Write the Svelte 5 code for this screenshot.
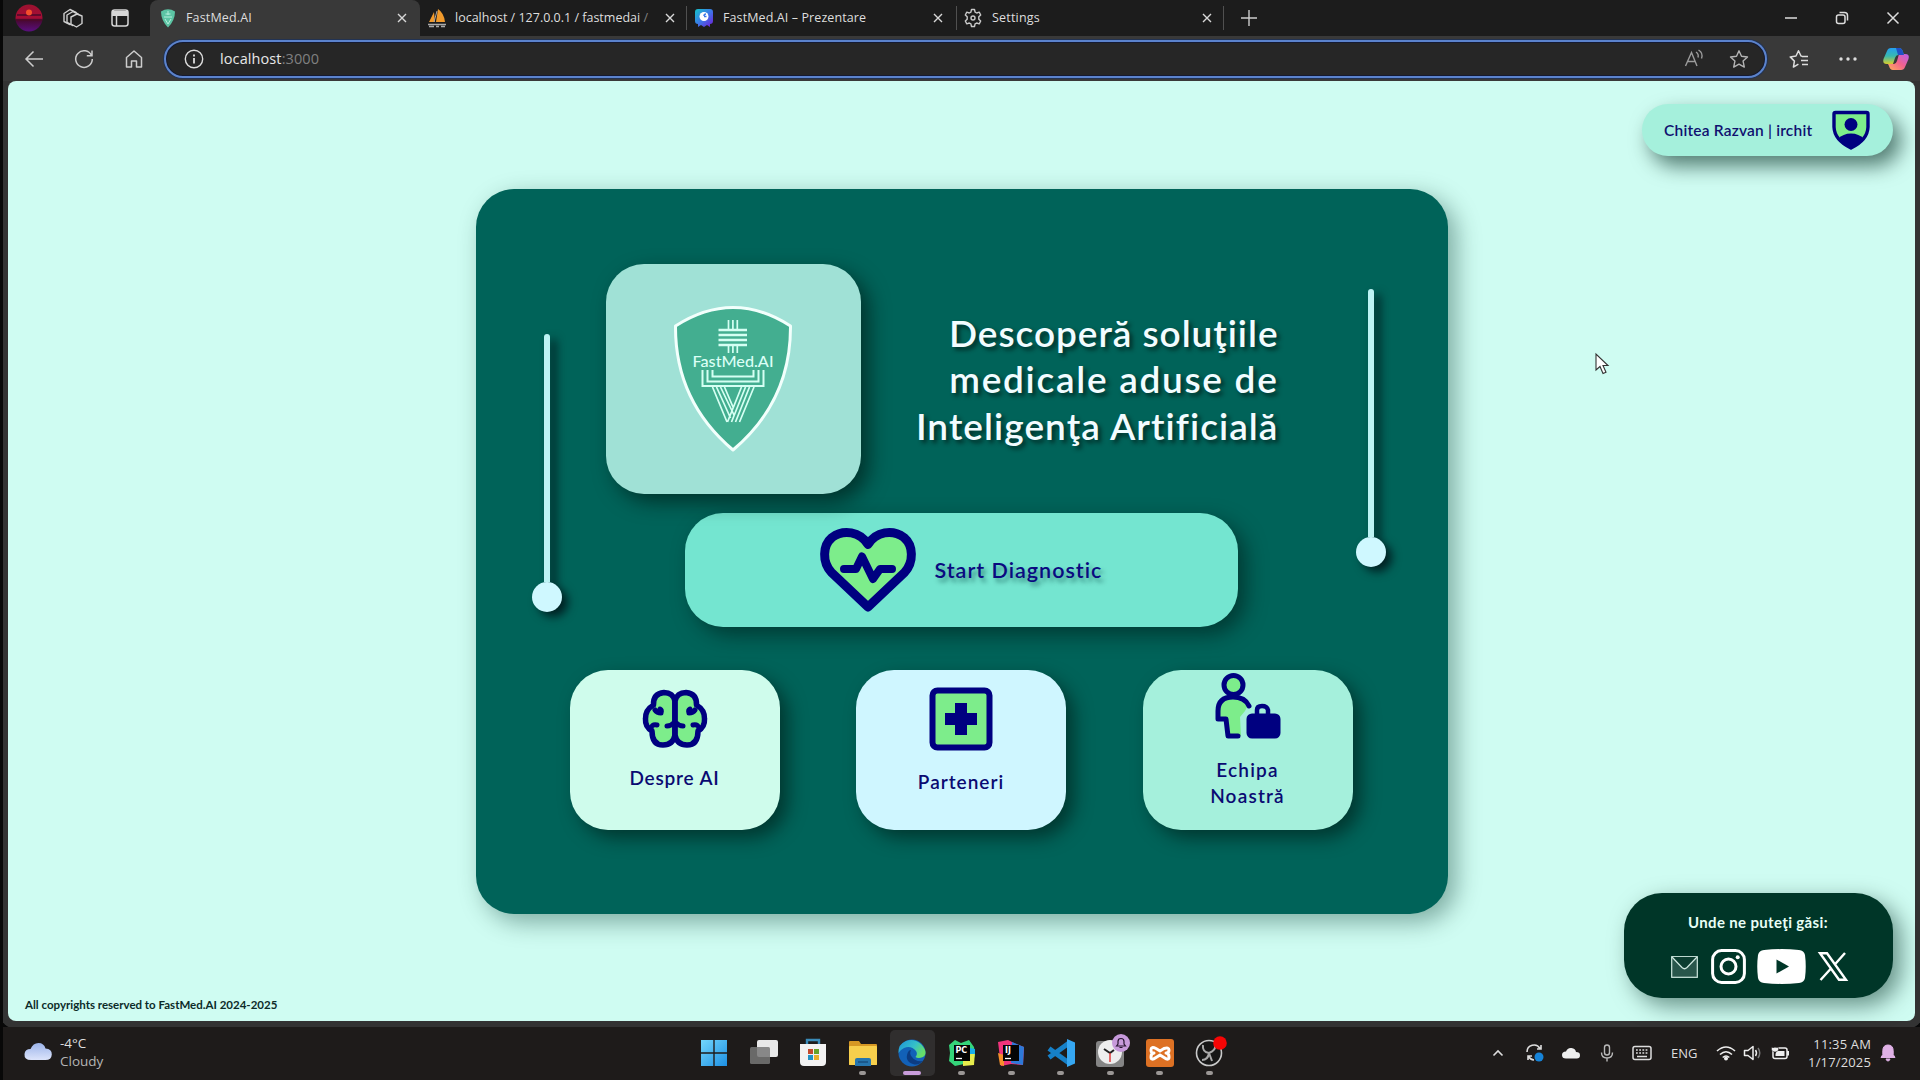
<script>
  const apps = ['windows', 'taskview', 'store', 'explorer', 'edge', 'pycharm', 'idea', 'vscode', 'clock', 'xampp', 'obs'];
  const running = ['explorer', 'pycharm', 'idea', 'vscode', 'clock', 'xampp', 'obs'];
</script>

{#snippet cross()}
  <svg class="cross" width="12" height="12" viewBox="0 0 12 12"><path d="M2 2l8 8M10 2l-8 8" stroke="#d8d8d8" stroke-width="1.4" fill="none" /></svg>
{/snippet}

<div class="screen">
  <header class="tabs">
    <div class="tools">
      <svg width="28" height="28" viewBox="0 0 28 28">
        <defs>
          <linearGradient id="avatar" x1="0" y1="0" x2="0" y2="1">
            <stop offset="0" stop-color="#9c1230" /><stop offset=".5" stop-color="#a50d35" /><stop offset=".6" stop-color="#4a0835" /><stop offset="1" stop-color="#5a0f80" />
          </linearGradient>
        </defs>
        <circle cx="14" cy="14" r="13.500" fill="url(#avatar)" />
        <path d="M2 11h24M1 16h26" stroke="#4b0a2a" stroke-width="1.3" />
        <circle cx="14" cy="8.500" r="3" fill="#f4502c" />
      </svg>
      <svg class="work" width="22" height="22" viewBox="0 0 22 22" fill="#1c1c1c" stroke="#cfcfcf" stroke-width="1.4" stroke-linejoin="round">
        <path d="M2 6.500L8 2.500l6 3v8l-6 4-6-3z" /><path d="M5 8l6-3.500 5 2.500v8l-5 3.500-6-3z" /><path d="M9 10l6-3 5 2v7.500l-5.500 3.500-5.500-3z" />
      </svg>
      <svg width="18" height="18" viewBox="0 0 18 18" fill="none" stroke="#d6d6d6" stroke-width="1.5">
        <rect x="1" y="1" width="16" height="16" rx="2.500" /><path d="M1 3.500h16M1 5.500h16" stroke-width="3" /><path d="M5.500 6v11" />
      </svg>
    </div>
    <div class="tab active">
      <svg class="fav" width="16" height="20" viewBox="0 0 16 20"><path d="M1 3.500Q8-1 15 3.500Q15 12.500 8 19.500Q1 12.500 1 3.500z" fill="#5cc4a4" /><path d="M8 3v4M5.500 6h5M4 9h8M5 11l3 5 3-5" stroke="#b4efdc" fill="none" /></svg>
      <span class="t1">FastMed.AI</span>{@render cross()}
    </div>
    <div class="tab second">
      <svg class="fav" width="20" height="20" viewBox="0 0 20 20"><path d="M2 14L7 4l1 10zM9 14L11 1q6 4 7 13z" fill="#f19a2c" /><path d="M10 3L7 14" stroke="#a6a6a6" /><path d="M1 16.500h18M2 18.500h5m2 0h3m2 0h4" stroke="#aaa" stroke-width="1.600" /></svg>
      <span class="t2">localhost / 127.0.0.1 / fastmedai <i>/</i></span>{@render cross()}
    </div>
    <div class="tab third">
      <svg class="fav" width="18" height="20" viewBox="0 0 18 20">
        <defs><linearGradient id="gam" x1="0" y1="0" x2="1" y2="1"><stop offset="0" stop-color="#14c4c8" /><stop offset=".5" stop-color="#3c78e8" /><stop offset="1" stop-color="#7318d8" /></linearGradient></defs>
        <path d="M3 1h12q3 0 3 3v9q0 3-3 3v3l-3-2-3 2-3-2-3 2v-3q-3 0-3-3V4q0-3 3-3z" fill="url(#gam)" />
        <circle cx="9" cy="8.500" r="4.500" fill="#fff" /><path d="M9 8.500h2.500M9 8q0-2 2-2" stroke="#3c78e8" stroke-width="1.500" fill="none" />
      </svg>
      <span class="t3">FastMed.AI – Prezentare</span>{@render cross()}
    </div>
    <div class="tab fourth">
      <svg class="fav" width="18" height="20" viewBox="0 0 18 20" fill="none" stroke="#c8c8c8" stroke-width="1.400" stroke-linejoin="round">
        <path d="M7.500 1.500h3l.6 2.600 1.600.9 2.500-.8 1.500 2.800-1.900 1.800v2.400l1.900 1.800-1.500 2.800-2.500-.8-1.600.9-.6 2.600h-3l-.6-2.600-1.600-.9-2.500.8-1.500-2.800 1.900-1.800V8.800L1.300 7l1.500-2.800 2.500.8 1.600-.9z" /><circle cx="9" cy="10" r="2" />
      </svg>
      <span class="t4">Settings</span>{@render cross()}
    </div>
    <svg class="plus" width="16" height="16" viewBox="0 0 16 16"><path d="M8 0v16M0 8h16" stroke="#ccc" stroke-width="1.400" /></svg>
    <div class="window">
      <svg width="14" height="14" viewBox="0 0 14 14"><path d="M1 7h12" stroke="#ddd" stroke-width="1.500" /></svg>
      <svg width="14" height="14" viewBox="0 0 14 14" fill="none" stroke="#ddd" stroke-width="1.500"><rect x="1.500" y="4" width="8.500" height="8.500" rx="2" /><path d="M4.500 1.500h5q3 0 3 3v5" /></svg>
      <svg width="14" height="14" viewBox="0 0 14 14"><path d="M1.500 1.500l11 11M12.500 1.500l-11 11" stroke="#ddd" stroke-width="1.500" /></svg>
    </div>
  </header>

  <nav class="toolbar">
    <div class="navicons">
      <svg width="20" height="20" viewBox="0 0 20 20" fill="none" stroke="#cdcdcd" stroke-width="1.500"><path d="M19 10H2M9.500 2.500L2 10l7.500 7.500" /></svg>
      <svg width="20" height="20" viewBox="0 0 20 20" fill="none" stroke="#cdcdcd" stroke-width="1.500"><path d="M17.500 6.500A8.300 8.300 0 1 0 18.300 10M18 1.500v5.200h-5.200" /></svg>
      <svg width="20" height="20" viewBox="0 0 20 20" fill="none" stroke="#cdcdcd" stroke-width="1.500" stroke-linejoin="round"><path d="M2.500 8.500L10 2l7.500 6.500V18h-5v-6h-5v6h-5z" /></svg>
    </div>
    <div class="address">
      <svg width="20" height="20" viewBox="0 0 20 20" fill="none" stroke="#ddd" stroke-width="1.400"><circle cx="10" cy="10" r="8.700" /><path d="M10 9v5.500M10 5.500v2" stroke-width="1.800" /></svg>
      <span class="url">localhost<i>:3000</i></span>
      <svg class="aloud" width="20" height="20" viewBox="0 0 20 20" fill="none" stroke="#9c9c9c" stroke-width="1.400"><path d="M1.500 17L7.500 3.500 13 17M3.500 12.500h7.500M12 3q3 2 2 5.500M14.500 1q5 3 3 8.500" /></svg>
      <svg width="20" height="20" viewBox="0 0 20 20" fill="none" stroke="#b4b4b4" stroke-width="1.400" stroke-linejoin="round"><path d="M10 1.800l2.500 5.500 6 .7-4.400 4.100 1.200 6L10 15.200 4.700 18.100l1.200-6L1.500 8l6-.7z" /></svg>
    </div>
    <div class="actions">
      <svg width="20" height="20" viewBox="0 0 20 20" fill="none" stroke="#ddd" stroke-width="1.500" stroke-linejoin="round"><path d="M13 7.200L12 7 9.500 1.800 7 7l-5.800.9 4.200 4.200-1 6 5-3M13 7.500h6M12 11.500h7M13 15.500h6" /></svg>
      <svg width="20" height="20" viewBox="0 0 20 20" fill="#ddd"><circle cx="3" cy="10" r="1.700" /><circle cx="10" cy="10" r="1.700" /><circle cx="17" cy="10" r="1.700" /></svg>
      <svg class="copilot" width="26" height="26" viewBox="0 0 26 26">
        <defs>
          <linearGradient id="copa" x1="0" y1="0" x2="0" y2="1"><stop offset="0" stop-color="#249ff0" /><stop offset=".5" stop-color="#38b9b0" /><stop offset="1" stop-color="#d8cd2b" /></linearGradient>
          <linearGradient id="copb" x1="1" y1="0" x2="0" y2="1"><stop offset="0" stop-color="#b760ed" /><stop offset=".5" stop-color="#f2628e" /><stop offset="1" stop-color="#ffae58" /></linearGradient>
        </defs>
        <path d="M8 2h8q3 0 4 4l1 3h-6q-2 0-3 3l-2 6H4q-5 0-3.500-5L4 5q1-3 4-3z" fill="url(#copa)" />
        <path d="M18 24h-8q-3 0-4-4l-1-2h6q2 0 3-3l2-7h6q5 0 3.500 5L22 21q-1 3-4 3z" fill="url(#copb)" />
        <path d="M13 2h3q3 0 4 4l1 3h-6z" fill="#2051c5" />
      </svg>
    </div>
  </nav>

  <main class="page">
    <div class="user">
      <span>Chitea Razvan | irchit</span>
      <svg width="38" height="40" viewBox="0 0 38 40">
        <path d="M3.500 2.500h31q1.500 0 1.500 1.500V17Q35.500 30 19 38Q2.500 30 2 17V4q0-1.500 1.500-1.500z" fill="#7ded8b" stroke="#000080" stroke-width="3.400" stroke-linejoin="round" />
        <circle cx="19" cy="14.500" r="6.500" fill="#000080" /><path d="M6 29Q11 23.500 19 23.500T32 29Q27 34.500 19 38.500Q11 34.500 6 29z" fill="#000080" />
      </svg>
    </div>

    <section class="panel">
      <div class="rail left"><b></b><em></em></div>
      <div class="content">
        <div class="hero">
          <div class="logo">
            <svg width="120" height="148" viewBox="0 0 120 148">
              <path d="M2.500 21Q60-16 117.500 21Q118 96 60 145Q2 96 2.500 21z" fill="#43ae90" stroke="#f2fffc" stroke-width="3" stroke-linejoin="round" />
              <g stroke="#d5fff3" stroke-width="1.700" fill="none">
                <path d="M55.500 15v9M59.900 15v9M64.300 15v9M55.500 39v9M59.900 39v9M64.300 39v9" />
                <path d="M45.500 25h28.500M45.500 30h28.500M45.500 35h28.500M45.500 40h28.500" stroke-width="2.400" />
                <path d="M29.500 65v16h61V65M34.500 65v11.500h51V65M39.500 65v6.500h41V65" stroke-width="2" />
                <path d="M39.500 82L54 117M43.500 82L57.500 113M47.500 82L61 110M51.500 82L60 102M81 82L66.500 117M76.500 82L62.500 117M72.500 82L58.500 117M68.500 82L54.500 117" />
              </g>
              <text x="60" y="62" text-anchor="middle" textLength="81" lengthAdjust="spacingAndGlyphs">FastMed.AI</text>
            </svg>
          </div>
          <h1><span class="l1">Descoperă soluţiile</span><span class="l2">medicale aduse de</span><span class="l3">Inteligenţa Artificială</span></h1>
        </div>

        <button class="start">
          <svg width="96" height="84" viewBox="0 0 96 84">
            <path d="M48 79L11.500 44.500C2 34 2.500 17.500 12 9.500C23.500 1 40 3.500 48 16.500C56 3.500 72.500 1 84 9.500C93.500 17.500 94 34 84.500 44.500z" fill="#7ded8b" stroke="#000080" stroke-width="9" stroke-linejoin="round" />
            <path d="M24 41h12l6-12.500L53 51l7-10h12" fill="none" stroke="#000080" stroke-width="8" stroke-linecap="round" stroke-linejoin="round" />
          </svg>
          <span>Start Diagnostic</span>
        </button>

        <div class="cards">
          <article class="about">
            <svg width="66" height="60" viewBox="0 0 66 60">
              <g fill="#7ded8b" stroke="#000080" stroke-width="5.500" stroke-linecap="round" stroke-linejoin="round">
                <path d="M33 12Q31 3.500 22 3.500Q11 4.500 11.500 16Q3 21 3.500 30Q3 38 10 42Q10 56 21 56Q31 56 33 46z" />
                <path d="M33 12Q35 3.500 44 3.500Q55 4.500 54.500 16Q63 21 62.500 30Q63 38 56 42Q56 56 45 56Q35 56 33 46z" />
                <path d="M19 24Q15 24 13 21M19 24Q20 21 18 20M47 24Q51 24 53 21M47 24Q46 21 48 20M9 40Q9 35 15 36M57 40Q57 35 51 36M33 33Q29 37 25 37M33 33Q37 37 41 37M33 12v34" fill="none" stroke-width="5" />
              </g>
            </svg>
            <span>Despre AI</span>
          </article>
          <article class="partners">
            <svg width="64" height="64" viewBox="0 0 64 64"><rect x="3.500" y="3.500" width="57" height="57" rx="5" fill="#7ded8b" stroke="#000080" stroke-width="6" /><path d="M26 16h12v10h10v12H38v10H26V38H16V26h10z" fill="#000080" /></svg>
            <span>Parteneri</span>
          </article>
          <article class="team">
            <svg width="68" height="68" viewBox="0 0 68 68" stroke="#000080" stroke-width="5" stroke-linejoin="round" stroke-linecap="round">
              <circle cx="19.500" cy="13" r="9.500" fill="#7ded8b" />
              <path d="M27 64H14L12 47H4V39Q4 25 19 25Q31 25 34 33L31 39 26 45z" fill="#7ded8b" stroke="none" />
              <path d="M24 64H14L12 47H4V39Q4 25 19 25Q31 25 35 34" fill="none" />
              <path d="M43 43v-5q0-4 5-4t6 4v5" fill="none" stroke-width="4.500" /><rect x="35" y="44" width="29" height="20" rx="3" fill="#000080" />
            </svg>
            <span>Echipa<br />Noastră</span>
          </article>
        </div>
      </div>
      <div class="rail right"><b></b><em></em></div>
    </section>

    <svg class="cursor" width="14" height="22" viewBox="0 0 14 22"><path d="M1 1v16l4-3.500 3 7 3-1.300-3-6.700h5z" fill="#fff" stroke="#333" stroke-width="1.100" /></svg>

    <footer>
      <small>All copyrights reserved to FastMed.AI 2024-2025</small>
      <div class="social">
        <strong>Unde ne puteţi găsi:</strong>
        <div class="links">
          <svg width="27" height="22" viewBox="0 0 27 22" fill="#28564b" stroke="#cfe8e0" stroke-width="1.200"><rect x=".7" y=".7" width="25.600" height="20.600" /><path d="M1 1l10 10.500q2.500 2.500 5 0L26 1" fill="#0b3d30" /></svg>
          <svg class="ig" width="35" height="35" viewBox="0 0 35 35" fill="none" stroke="#fff" stroke-width="3"><rect x="1.600" y="1.600" width="31.800" height="31.800" rx="9" /><circle cx="17.500" cy="17.500" r="7.500" /><circle cx="26.700" cy="8.300" r="2" fill="#fff" stroke="none" /></svg>
          <svg class="yt" width="49" height="35" viewBox="0 0 49 35"><path d="M7 1Q24.500-.8 42 1Q47 1.500 48 6Q49.500 17.500 48 29Q47 33.500 42 34Q24.500 35.800 7 34Q2 33.500 1 29Q-.5 17.500 1 6Q2 1.500 7 1z" fill="#fff" /><path d="M19.500 10.500v14l12.500-7z" fill="#003628" /></svg>
          <svg class="x" width="30" height="29" viewBox="0 0 30 29" fill="none" stroke="#fff" stroke-width="2.400"><path d="M2 1.200h7L28 27.800h-7zM27 1L17 12.300M12.500 17L2.500 28" /></svg>
        </div>
      </div>
    </footer>
  </main>

  <div class="taskbar">
    <div class="weather">
      <svg width="28" height="20" viewBox="0 0 28 20"><defs><linearGradient id="cloud" x1="0" y1="0" x2="0" y2="1"><stop offset="0" stop-color="#9cb4ea" /><stop offset="1" stop-color="#dce4fb" /></linearGradient></defs><path d="M7 18Q0 18 .5 12Q1 7 6.500 7Q9 1 14.500 1Q20 1 21.500 6.500Q28 7 27.800 12.500Q27.500 18 21.500 18z" fill="url(#cloud)" /></svg>
      <div><span>-4°C</span><span class="dim">Cloudy</span></div>
    </div>
    <div class="apps">
      {#each apps as app}
        <div class="app" class:current={app === 'edge'} class:running={running.includes(app)}>
          <svg width="28" height="28" viewBox="0 0 28 28">
            {#if app === 'windows'}
              <defs><linearGradient id="win" x1="0" y1="0" x2="1" y2="1"><stop offset="0" stop-color="#73d6fb" /><stop offset="1" stop-color="#1d90e4" /></linearGradient></defs>
              <path d="M1 1h12.300v12.300H1zM14.700 1H27v12.300H14.700zM1 14.700h12.300V27H1zM14.700 14.700H27V27H14.700z" fill="url(#win)" />
            {:else if app === 'taskview'}
              <rect x="7" y="1" width="21" height="17" rx="2" fill="#e9e9e9" /><rect y="8" width="20" height="17" rx="1.500" fill="#777" opacity=".85" />
            {:else if app === 'store'}
              <path d="M8 5V1h12v4" fill="none" stroke="#3a8bb8" stroke-width="2.400" /><path d="M1 5h26v18q0 4-4 4H5q-4 0-4-4z" fill="#f2f2f2" />
              <path d="M9 10h5v5H9z" fill="#c44a2c" /><path d="M15 10h5v5h-5z" fill="#67a328" /><path d="M9 16h5v5H9z" fill="#2292c4" /><path d="M15 16h5v5h-5z" fill="#eab02a" />
            {:else if app === 'explorer'}
              <path d="M0 3q0-1 1-1h9l2 3h15q1 0 1 1v20H0z" fill="#d69824" /><path d="M0 8q0-1 1-1h26q1 0 1 1v17q0 1-1 1H1q-1 0-1-1z" fill="#f7cf4c" /><path d="M6 27v-6q0-2 2-2h12q2 0 2 2v6z" fill="#2675ad" /><path d="M9 23h10" stroke="#174f80" stroke-width="1.500" />
            {:else if app === 'edge'}
              <defs><linearGradient id="edge" x1="0" y1="0" x2="1" y2=".5"><stop offset="0" stop-color="#1d93da" /><stop offset=".6" stop-color="#35c0c8" /><stop offset="1" stop-color="#66de69" /></linearGradient></defs>
              <circle cx="14" cy="14" r="13.500" fill="#1261b8" /><path d="M.5 14Q0 5 8 2Q16-1 23 5Q31 14 25 18Q20 20 17.500 18Q20 15 18 12Q13 6 6 9Q2 11 .5 14z" fill="url(#edge)" /><path d="M10 13Q6 22 15 25Q20 27 25 22Q17 23 14 18Q11 15 13 11Q11 11 10 13z" fill="#0c3c82" />
            {:else if app === 'pycharm'}
              <path d="M1 6l6-5 6 3 8-3 5 7 1 8-3 10-8-1-9 2-6-5 1-8z" fill="#35d57a" /><path d="M15 20l12-8-1 14-11 1z" fill="#e8ed4d" /><path d="M22 9l5 1v5h-5z" fill="#18aeea" /><path d="M6 6h16v16H6z" fill="#050505" /><text x="7.500" y="14" class="ide">PC</text><path d="M8 19.500h6" stroke="#fff" stroke-width="1.300" />
            {:else if app === 'idea'}
              <path d="M1 3l10-2 8 4 8 3-1 18-12-1-10 2z" fill="#f0347c" /><path d="M1 14l6 2v11l-4-1z" fill="#f7902b" /><path d="M15 3l12 5-1 18-12-2z" fill="#2d79d8" /><path d="M6 6h16v16H6z" fill="#050505" /><text x="8" y="14" class="ide">IJ</text><path d="M8 19.500h6" stroke="#fff" stroke-width="1.300" />
            {:else if app === 'vscode'}
              <path d="M2 9.500L22 24M2 18.500L22 4" stroke="#1680c8" stroke-width="5" /><path d="M20 0l8 3.500v21L20 28z" fill="#36a7f2" />
            {:else if app === 'clock'}
              <rect y="2" width="28" height="26" rx="3" fill="#858585" /><circle cx="14" cy="13" r="12" fill="#eee" /><path d="M8 10l6 4 4-3" stroke="#222" stroke-width="2" fill="none" /><path d="M14 14v9" stroke="#e03e3e" stroke-width="1.500" />
            {:else if app === 'xampp'}
              <rect x="0" y="0" width="28" height="28" rx="3" fill="#dd7124" /><path d="M10 9.500Q5 7 5 11T8 14Q5 14 5 18T10 18.500L14 16l4 2.500Q23 22 23 18T20 14Q23 14 23 11T18 9.500L14 12z" fill="#dd7124" stroke="#fff" stroke-width="3" stroke-linejoin="round" />
            {:else}
              <circle cx="14" cy="14" r="12.500" fill="#171717" stroke="#c9c9c9" stroke-width="1.600" /><path d="M14 14Q7 13 8 6M14 14Q21 11 20 7M14 14Q13 21 7 21M14 14l3 8" stroke="#aaa" stroke-width="2" fill="none" />
            {/if}
          </svg>
          {#if app === 'clock'}
            <svg class="badge bell" width="18" height="18" viewBox="0 0 18 18"><circle cx="9" cy="9" r="9" fill="#c79adb" /><path d="M4.500 12l1.500-2V7.500Q6 4.500 9 4.500T12 7.500V10l1.500 2zM7.500 13.500h3" fill="none" stroke="#27152f" stroke-width="1.200" /></svg>
          {:else if app === 'obs'}
            <svg class="badge rec" width="14" height="14" viewBox="0 0 14 14"><circle cx="7" cy="7" r="6.800" fill="#f60505" /></svg>
          {/if}
        </div>
      {/each}
    </div>
    <div class="tray">
      <svg width="12" height="20" viewBox="0 0 12 20"><path d="M1.500 12.500L6 8l4.500 4.500" fill="none" stroke="#ddd" stroke-width="1.600" /></svg>
      <svg class="sync" width="20" height="20" viewBox="0 0 20 20" fill="none" stroke="#ddd" stroke-width="1.600"><path d="M2 9a7 7 0 0 1 13-3.500M16 2v4h-4M3 17v-4h4M3.500 13.500A7 7 0 0 0 9 17" /><circle cx="14" cy="14" r="4.500" fill="#1683d8" stroke="none" /></svg>
      <svg class="drive" width="20" height="20" viewBox="0 0 20 20"><path d="M5 15.500Q1 15.500 1 12T5 8.500Q6.500 4.500 10.500 5T15 9Q19 9 19 12.300T15.500 15.500z" fill="#eee" /></svg>
      <svg class="mic" width="14" height="20" viewBox="0 0 14 20" fill="none" stroke="#b9b9b9" stroke-width="1.400"><rect x="4.500" y="2" width="5" height="10" rx="2.500" /><path d="M1.500 9.500q0 5.500 5.500 5.500t5.500-5.500M7 15v3.500" /></svg>
      <svg class="keys" width="20" height="20" viewBox="0 0 20 20" fill="none" stroke="#ddd" stroke-width="1.500"><rect x="1" y="3.500" width="18" height="13" rx="2" /><path d="M4 7h12M4 10h12" stroke-dasharray="1.800 1.400" /><path d="M5 13.500h10" /></svg>
      <span class="lang">ENG</span>
      <svg class="wifi" width="20" height="20" viewBox="0 0 20 20" fill="none" stroke="#eee" stroke-width="1.600"><path d="M1 8q9-8 18 0M4 11.500q6-5.500 12 0M6.700 14.500q3.300-3 6.600 0" /><circle cx="10" cy="15.500" r="1.200" fill="#eee" /></svg>
      <svg class="vol" width="20" height="20" viewBox="0 0 20 20" fill="none" stroke="#eee" stroke-width="1.500" stroke-linejoin="round"><path d="M1.500 7.500H5L10 3.500v13L5 12.500H1.500zM12.500 7q2 3 0 6" /><path d="M15 5q3.500 5 0 10" stroke="#777" /></svg>
      <svg class="batt" width="20" height="20" viewBox="0 0 20 20"><rect x="3" y="5" width="14" height="10.500" rx="2" fill="none" stroke="#eee" stroke-width="1.500" /><path d="M6.500 8h8v5h-9v-2z" fill="#eee" /><path d="M18 8v4.500" stroke="#eee" stroke-width="2" /><path d="M3.500 1v4M7 1v4M1.500 4.500h7v2.500q-1 2-3.500 2T1.500 7z" stroke="#1e1b1a" stroke-width=".5" fill="#eee" /></svg>
      <div class="time"><span>11:35 AM</span><span>1/17/2025</span></div>
      <svg class="notify" width="16" height="18" viewBox="0 0 16 18"><path d="M1 13.500l1.800-3V6.500Q3 1 8 1t5.200 5.500v4l1.800 3zM6 15h4q-.5 2-2 2T6 15z" fill="#dfb1e6" stroke="#dfb1e6" /></svg>
    </div>
  </div>
</div>

<style>
  :global(body) { background: #080808; overflow: hidden; }
  * { box-sizing: border-box; }
  svg { display: block; flex: none; overflow: visible; }
  i { font-style: normal; color: #808080; }
  .screen { width: 1920px; height: 1080px; display: flex; flex-direction: column; padding-left: 3px; background: #080808; font-family: 'Open Sans', 'Noto Sans', sans-serif; color: #dedede; }

  .tabs { height: 36px; flex: none; display: flex; background: #1c1c1c; font-size: 12.5px; }
  .tools { width: 147px; display: flex; align-items: center; padding-left: 12px; }
  .work { margin: 0 27px 0 19px; }
  .tab { display: flex; align-items: center; border-right: 1px solid #505050; background-clip: padding-box; white-space: nowrap; }
  .tab span { margin-top: -1px; }
  .tab .cross { margin-left: auto; }
  .active { width: 270px; padding: 0 12px 0 10px; background: #393939; border: 0; border-radius: 8px 8px 0 0; }
  .active .fav { margin-right: 10px; }
  .second { width: 267px; padding: 0 10px 0 7px; }
  .second .fav { margin-right: 8px; }
  .third { width: 270px; padding: 0 12px 0 8px; }
  .third .fav { margin-right: 10px; }
  .fourth { width: 267px; padding: 0 10px 0 7px; }
  .fourth .fav { margin-right: 10px; }
  .second, .third, .fourth { height: 24px; margin-top: 6px; }
  .t1 { letter-spacing: .15px; }
  .t3 { letter-spacing: .1px; }
  .t4 { letter-spacing: .2px; }
  .plus { margin: 10px 0 0 17px; }
  .window { margin-left: auto; display: flex; gap: 37px; padding: 11px 20px 0 0; }

  .toolbar { height: 45px; flex: none; display: flex; align-items: center; background: #393939; }
  .navicons { width: 161px; padding-left: 21px; display: flex; gap: 30px; }
  .address { width: 1603px; height: 38px; border: 2px solid #5b83cd; border-radius: 19px; background: #262626; display: flex; align-items: center; padding: 0 16px 0 18px; box-shadow: inset 0 0 0 1px #141a33, 0 0 0 1px #223353; font-size: 14.500px; }
  .url { margin-left: 16px; color: #e8e8e8; letter-spacing: .1px; }
  .aloud { margin: 0 25px 0 auto; }
  .actions { display: flex; align-items: center; margin-left: 22px; gap: 29px; }
  .copilot { margin-left: -4px; }

  .page { width: 1907px; height: 940px; flex: none; margin: 0 0 0 5px; border-radius: 8px; background: #cffcf2; position: relative; display: flex; flex-direction: column; font-family: Lato, 'Open Sans', sans-serif; box-shadow: 0 0 0 8px #333; clip-path: inset(0 -5px -7px -5px); }
  .user { width: 251px; height: 52px; flex: none; align-self: flex-end; margin: 23px 22px 0 0; padding: 0 23px 0 22px; border-radius: 26px; background: #a5f0dc; display: flex; align-items: center; justify-content: space-between; color: #101070; font-size: 15.500px; font-weight: 600; letter-spacing: .2px; box-shadow: 8px 10px 20px rgba(0, 40, 30, .6); white-space: nowrap; }
  .user svg { margin-top: -1px; }

  .panel { width: 972px; height: 725px; flex: none; margin: 33px 0 0 467.500px; border-radius: 38px; background: #006359; box-shadow: 8px 8px 24px rgba(0, 50, 40, .4); display: grid; grid-template-columns: 30px 783px 30px; padding: 75px 0 0 56px; }
  .content { margin-left: 8px; width: 783px; }
  .rail { display: flex; flex-direction: column; align-items: center; filter: drop-shadow(6px 5px 5px rgba(0, 15, 20, .8)); }
  .rail b { width: 6px; height: 248px; border-radius: 3px 3px 0 0; background: #bdf3f4; }
  .rail em { width: 30px; height: 30px; border-radius: 50%; background: #cff8ff; }
  .left { margin-top: 70px; }
  .right { margin: 25px 0 0 11px; width: 30px; }
  .hero { display: flex; height: 230px; padding-left: 36px; }
  .logo { width: 255px; height: 230px; border-radius: 38px; background: #a0e1d6; box-shadow: 8px 8px 20px rgba(0, 20, 15, .6); display: grid; place-items: center; }
  .logo text { font: 500 15.500px Lato, sans-serif; fill: #dcfff6; }
  h1 { width: 418px; margin: 46px 0 0; font-size: 37px; line-height: 46.500px; font-weight: 600; color: #f2fcff; text-shadow: 3px 3px 4px rgba(0, 25, 22, .75); white-space: nowrap; display: flex; flex-direction: column; align-items: flex-end; }
  .l1 { letter-spacing: .95px; }
  .l2 { letter-spacing: 1.700px; margin-top: -.5px; }
  .l3 { letter-spacing: 1.050px; }
  .start { width: 553px; height: 114px; margin: 19px 0 0 115px; padding: 0 0 0 135px; border: 0; border-radius: 38px; background: #74e5d0; box-shadow: 8px 8px 20px rgba(0, 20, 15, .5); display: flex; align-items: center; gap: 19px; color: #0a0a80; font: 600 21.500px Lato, sans-serif; letter-spacing: 1px; text-shadow: 3px 4px 4px rgba(0, 60, 60, .5); white-space: nowrap; }
  .cards { display: flex; justify-content: space-between; margin-top: 43px; }
  article { width: 210px; height: 159.500px; border-radius: 38px; box-shadow: 8px 8px 18px rgba(0, 20, 15, .55); display: flex; flex-direction: column; align-items: center; color: #0a0a72; font-size: 19px; line-height: 25.500px; font-weight: 600; letter-spacing: .8px; text-align: center; }
  .about { background: #cffcec; padding-top: 19px; }
  .about span { margin-top: 16px; }
  .partners { background: #cff6ff; padding-top: 16.500px; }
  .partners span { margin-top: 18px; letter-spacing: 1px; }
  .team { background: #a5f0dc; padding-top: 2px; }
  .team span { margin-top: 17px; letter-spacing: 1.200px; }
  .cursor { position: absolute; left: 1587px; top: 272px; }
  footer { position: absolute; inset: auto 0 0; display: flex; justify-content: space-between; align-items: flex-end; padding: 0 22px 23px 17px; color: #0c2b29; }
  small { font-size: 11.500px; font-weight: 700; margin-bottom: -13px; white-space: nowrap; }
  .social { width: 269px; height: 105px; border-radius: 38px; background: #003628; box-shadow: 8px 8px 22px rgba(0, 40, 30, .5); padding: 19px 0 0 47px; color: #e9fff6; }
  .social strong { display: block; font-size: 15px; line-height: 20px; letter-spacing: .35px; margin-left: 17px; white-space: nowrap; }
  .links { display: flex; align-items: center; margin-top: 17px; }
  .ig { margin-left: 13px; }
  .yt { margin: 0 12px 0 11px; }

  .taskbar { height: 53px; margin-top: 6px; flex: none; background: #1e1b1a; display: flex; align-items: center; position: relative; z-index: 1; }
  .weather { width: 686.500px; padding: 0 0 3px 21px; display: flex; align-items: center; gap: 8px; font-size: 13.500px; line-height: 18px; }
  .weather div { display: flex; flex-direction: column; }
  .dim { color: #b5b5b5; }
  .apps { display: flex; height: 100%; }
  .app { position: relative; width: 49.500px; display: flex; flex-direction: column; align-items: center; padding-top: 12px; }
  .app::after { content: ''; width: 7px; height: 4px; border-radius: 2px; margin-top: 4px; }
  .running::after { background: #9b9795; }
  .current { width: 45px; margin: 3px 2.250px 2px; height: 46px; padding-top: 9px; border-radius: 5px; background: #302e2e; }
  .current::after { width: 18px; background: #c99ddb; }
  .badge { position: absolute; }
  .bell { left: 26px; top: 7px; }
  .rec { left: 28px; top: 9px; }
  .ide { font: 700 8px 'DejaVu Sans', sans-serif; fill: #fff; }
  .tray { margin-left: auto; padding: 0 24px 2px 0; display: flex; align-items: center; font-size: 13px; white-space: nowrap; }
  .sync { margin-left: 21px; }
  .drive { margin-left: 16px; }
  .mic { margin-left: 19px; }
  .keys { margin-left: 18px; }
  .lang { margin-left: 19px; width: 27px; font-size: 13px; }
  .wifi { margin-left: 18px; }
  .vol { margin-left: 7px; }
  .batt { margin-left: 7px; }
  .time { width: 81px; display: flex; flex-direction: column; align-items: flex-end; line-height: 18px; letter-spacing: .15px; }
  .notify { margin-left: 9px; }
</style>
